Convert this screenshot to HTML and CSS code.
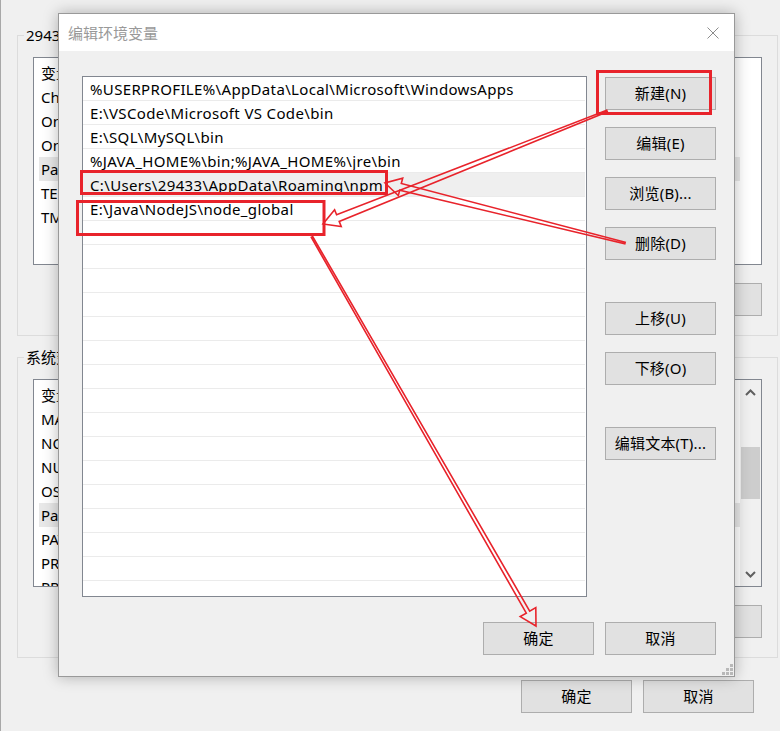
FILE: index.html
```html
<!DOCTYPE html>
<html lang="zh-CN">
<head>
    <meta charset="UTF-8">
    <title>编辑环境变量</title>
    <link rel="stylesheet" href="styles.css">
</head>
<body>

    <!-- 背后的 环境变量 窗口 -->
    <div class="env-window">
        <fieldset class="group">
            <legend>29433 的用户变量(U)</legend>
            <div class="group-body">
                <div class="listview">
                    <div class="lv-rows">
                        <div class="lv-head"><span>变量</span></div>
                        <div class="lv-row"><span>ChocolateyLastPathUpdate</span></div>
                        <div class="lv-row"><span>OneDrive</span></div>
                        <div class="lv-row"><span>OneDriveConsumer</span></div>
                        <div class="lv-row selected"><span>Path</span></div>
                        <div class="lv-row"><span>TEMP</span></div>
                        <div class="lv-row"><span>TMP</span></div>
                    </div>
                </div>
                <div class="btn-row">
                    <button class="btn">新建(N)...</button>
                    <button class="btn">编辑(E)...</button>
                    <button class="btn">删除(D)</button>
                </div>
            </div>
        </fieldset>

        <fieldset class="group group-sys">
            <legend>系统变量(S)</legend>
            <div class="group-body">
                <div class="listview">
                    <div class="lv-rows">
                        <div class="lv-head"><span>变量</span></div>
                        <div class="lv-row"><span>MAVEN_HOME</span></div>
                        <div class="lv-row"><span>NODE_PATH</span></div>
                        <div class="lv-row"><span>NUMBER_OF_PROCESSORS</span></div>
                        <div class="lv-row"><span>OS</span></div>
                        <div class="lv-row selected"><span>Path</span></div>
                        <div class="lv-row"><span>PATHEXT</span></div>
                        <div class="lv-row"><span>PROCESSOR_ARCHITECTURE</span></div>
                        <div class="lv-row"><span>PROCESSOR_IDENTIFIER</span></div>
                    </div>
                    <div class="scrollbar">
                        <svg width="21" height="16" viewBox="0 0 21 16"><path d="M6 10 L10.5 5.5 L15 10" fill="none" stroke="#606060" stroke-width="2"/></svg>
                        <div class="thumb"></div>
                        <svg class="sb-down" width="21" height="16" viewBox="0 0 21 16"><path d="M6 6 L10.5 10.5 L15 6" fill="none" stroke="#606060" stroke-width="2"/></svg>
                    </div>
                </div>
                <div class="btn-row">
                    <button class="btn">新建(W)...</button>
                    <button class="btn">编辑(I)...</button>
                    <button class="btn">删除(L)</button>
                </div>
            </div>
        </fieldset>

        <div class="main-buttons">
            <button class="btn">确定</button>
            <button class="btn">取消</button>
        </div>
    </div>

    <!-- 编辑环境变量 对话框 -->
    <div class="edit-dialog">
        <div class="titlebar">
            <span class="title">编辑环境变量</span>
            <svg class="close" width="12" height="12" viewBox="0 0 12 12">
                <path d="M0.5 0.5 L11.5 11.5 M11.5 0.5 L0.5 11.5" stroke="#8c8c8c" stroke-width="1"/>
            </svg>
        </div>
        <div class="dialog-body">
            <ul class="path-list">
                <li>%USERPROFILE%\AppData\Local\Microsoft\WindowsApps</li>
                <li>E:\VSCode\Microsoft VS Code\bin</li>
                <li>E:\SQL\MySQL\bin</li>
                <li>%JAVA_HOME%\bin;%JAVA_HOME%\jre\bin</li>
                <li class="selected">C:\Users\29433\AppData\Roaming\npm</li>
                <li>E:\Java\NodeJS\node_global</li>
                <li></li><li></li><li></li><li></li><li></li><li></li><li></li><li></li>
                <li></li><li></li><li></li><li></li><li></li><li></li><li></li><li></li>
            </ul>
            <div class="side-buttons">
                <button class="btn">新建(N)</button>
                <button class="btn">编辑(E)</button>
                <button class="btn">浏览(B)...</button>
                <button class="btn">删除(D)</button>
                <button class="btn spaced">上移(U)</button>
                <button class="btn">下移(O)</button>
                <button class="btn spaced">编辑文本(T)...</button>
            </div>
            <div class="footer-buttons">
                <button class="btn">确定</button>
                <button class="btn">取消</button>
            </div>
        </div>
        <svg class="grip" width="11" height="11" viewBox="0 0 11 11" fill="#b8b8b8">
            <rect x="8" y="0" width="3" height="3"/>
            <rect x="4" y="4" width="3" height="3"/><rect x="8" y="4" width="3" height="3"/>
            <rect x="0" y="8" width="3" height="3"/><rect x="4" y="8" width="3" height="3"/><rect x="8" y="8" width="3" height="3"/>
        </svg>
    </div>

    <!-- 红色标注 -->
    <svg class="marks" width="780" height="731" viewBox="0 0 780 731">
        <g fill="none" stroke="#e8232b">
            <rect x="597.5" y="71.5" width="113" height="42" stroke-width="3"/>
            <rect x="81.5" y="171.5" width="305" height="22" stroke-width="3"/>
            <rect x="77.5" y="201.5" width="246.5" height="33" stroke-width="3"/>
            <g stroke-width="1.6" stroke-linejoin="miter">
                <polygon points="606.7,110.3 336.6,214.8 334.6,209.7 323,224 341.2,226.5 339.2,221.4 607.3,111.7"/>
                <polygon points="625.2,242.2 401.3,183.5 402.7,178.2 385,183 398.3,195.6 399.7,190.3 624.8,243.8"/>
                <polygon points="311.3,237.4 526.3,613.1 520.2,616.6 536,626 535.8,607.6 529.7,611.1 312.7,236.6"/>
            </g>
        </g>
    </svg>

</body>
</html>
```

FILE: styles.css
```css
/* Reset default styles */
* {
    margin: 0;
    padding: 0;
    box-sizing: border-box;
}

body {
    width: 780px;
    height: 731px;
    overflow: hidden;
    position: relative;
    background-color: #f0f0f0;
    box-shadow: inset 1px 0 0 #a8a8a8;
    font-family: "Noto Sans", "Noto Sans CJK SC", sans-serif;
    font-size: 15px;
    color: #000;
}

/* ---- back window ---- */
.env-window {
    padding: 25px 0 0 17px;
}

.group {
    width: 761px;
    border: 1px solid #dcdcdc;
}

.group legend {
    margin-left: 6px;
    padding: 0 2px;
    line-height: 20px;
}

.group-sys {
    margin-top: 11px;
}

.group-body {
    padding: 12px 15px 19px 15px;
}

.listview {
    height: 208px;
    border: 1px solid #828790;
    background-color: white;
    display: flex;
    padding-left: 5px;
    overflow: hidden;
}

.lv-rows {
    width: 701px;
    padding-top: 3px;
}

.lv-head, .lv-row {
    display: grid;
    grid-template-columns: 200px 1fr;
    height: 24px;
    line-height: 24px;
    padding-left: 2px;
    white-space: nowrap;
    overflow: hidden;
}

.lv-head span:first-child {
    border-right: 1px solid #e5e5e5;
}

.lv-row.selected {
    background-color: #e8e8e8;
}

.scrollbar {
    width: 21px;
    background-color: #f0f0f0;
    display: flex;
    flex-direction: column;
    align-items: center;
    padding-top: 5px;
}

.thumb {
    width: 19px;
    height: 52px;
    margin-top: 46px;
    background-color: #cdcdcd;
}

.sb-down {
    margin-top: auto;
    margin-bottom: 4px;
}

.btn-row {
    display: flex;
    justify-content: flex-end;
    gap: 11px;
    margin-top: 18px;
}

.btn {
    width: 111px;
    height: 33px;
    padding-bottom: 2px;
    background-color: #e1e1e1;
    border: 1px solid #adadad;
    font-family: inherit;
    font-size: 15px;
    letter-spacing: 0.2px;
    color: #000;
}

.main-buttons {
    width: 761px;
    display: flex;
    justify-content: flex-end;
    gap: 11px;
    padding-right: 24px;
    margin-top: 22px;
}

/* ---- edit dialog ---- */
.edit-dialog {
    position: absolute;
    left: 58px;
    top: 13px;
    width: 677px;
    height: 664px;
    border: 1px solid #999;
    background-color: #f0f0f0;
    box-shadow: 0 0 14px rgba(0, 0, 0, 0.28);
}

.titlebar {
    height: 37px;
    background-color: white;
    display: flex;
    align-items: center;
    justify-content: space-between;
    padding: 0 15px 0 9px;
}

.title {
    color: #999;
    font-size: 15px;
}

.dialog-body {
    display: grid;
    grid-template-columns: 505px 111px;
    grid-template-rows: 521px 33px;
    column-gap: 18px;
    row-gap: 25px;
    padding: 25px 18px 21px 23px;
}

.path-list {
    list-style: none;
    border: 1px solid #828790;
    background-color: white;
    overflow: hidden;
}

.path-list li {
    height: 24px;
    line-height: 24px;
    margin-right: 1px;
    padding-left: 7px;
    border-bottom: 1px solid #ebebeb;
    white-space: nowrap;
    letter-spacing: 0.35px;
}

.path-list li.selected {
    background-color: #efefef;
}

.side-buttons {
    display: flex;
    flex-direction: column;
    gap: 17px;
    padding-top: 1px;
}

.side-buttons .spaced {
    margin-top: 25px;
}

.footer-buttons {
    grid-column: 1 / 3;
    display: flex;
    justify-content: flex-end;
    gap: 11px;
}

.grip {
    position: absolute;
    right: 1px;
    bottom: 1px;
}

/* ---- annotations ---- */
.marks {
    position: absolute;
    left: 0;
    top: 0;
    pointer-events: none;
}
```
